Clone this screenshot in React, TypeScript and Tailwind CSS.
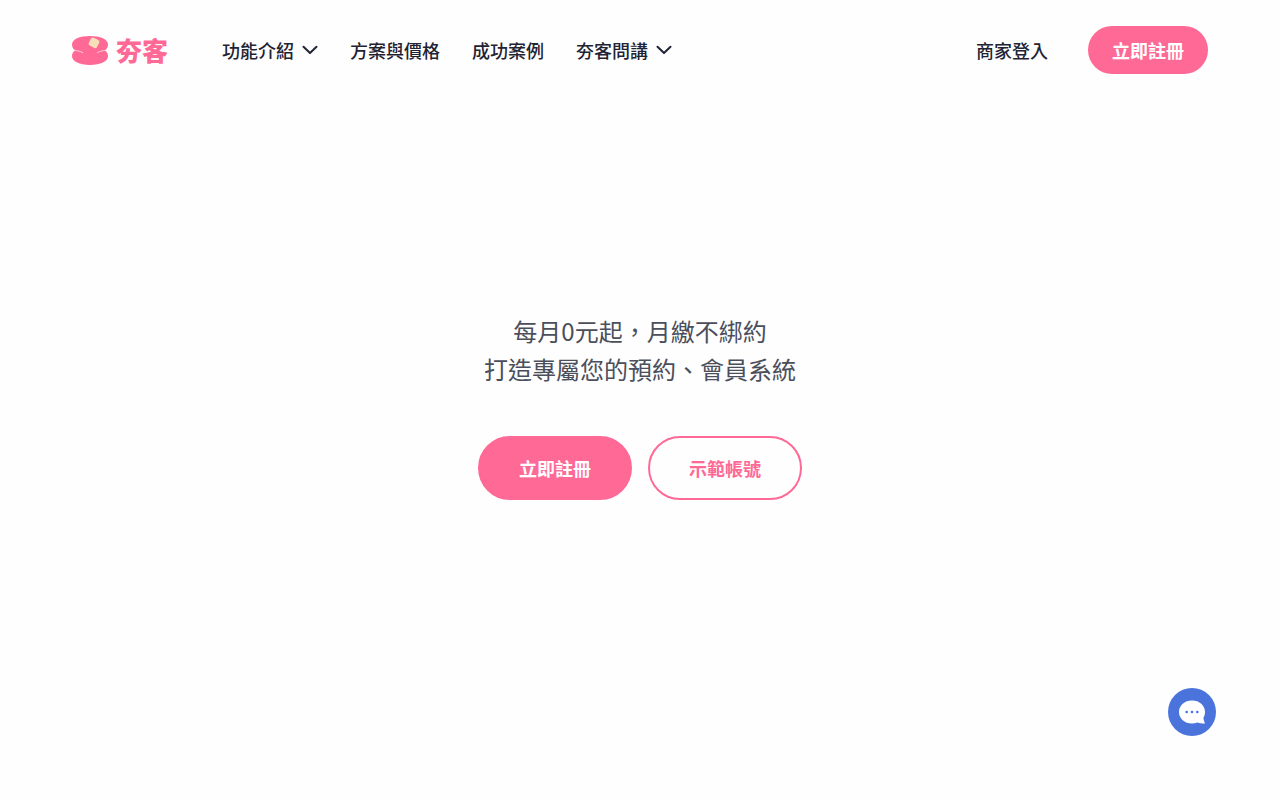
import { useState } from 'react'

type NavItem = {
  label: string
  href: string
  hasMenu?: boolean
}

const navItems: NavItem[] = [
  { label: '功能介紹', href: '#features', hasMenu: true },
  { label: '方案與價格', href: '#pricing' },
  { label: '成功案例', href: '#cases' },
  { label: '夯客問講', href: '#help', hasMenu: true },
]

function Logo() {
  return (
    <a href="#home" className="flex items-center gap-2 text-[#ff6996]">
      <svg className="h-[30px] w-9" viewBox="0 0 36 30" aria-hidden="true">
        <path
          fill="currentColor"
          d="M18 1C7.5 1 0 4.4 0 9.6C0 12.2 1.2 14.1 3.2 15.6C1.2 16.9 0 18.8 0 21C0 26.4 7.5 30 18 30S36 26.4 36 21C36 18.8 34.8 16.9 32.8 15.6C34.8 14.1 36 12.2 36 9.6C36 4.4 28.5 1 18 1Z"
        />
        <path
          fill="none"
          stroke="#ffffff"
          strokeWidth="0.6"
          strokeLinecap="round"
          d="M3 15.4Q7 15.6 10.8 17.6M33 15.4Q29 15.6 25.2 17.6"
        />
        <rect x="17.4" y="3.4" width="9.2" height="8.8" rx="2" fill="#f9dfb9" transform="rotate(27 22 7.8)" />
      </svg>
      <span className="text-[26px] leading-8 font-black">夯客</span>
    </a>
  )
}

function Chevron() {
  return (
    <svg
      className="size-4"
      viewBox="0 0 16 16"
      fill="none"
      stroke="currentColor"
      strokeWidth="2"
      strokeLinecap="round"
      strokeLinejoin="round"
      aria-hidden="true"
    >
      <path d="M1.5 4.8L8 11L14.5 4.8" />
    </svg>
  )
}

function ChatIcon() {
  return (
    <svg className="size-12" viewBox="0 0 48 48" aria-hidden="true">
      <path
        fill="#ffffff"
        d="M24 12.5C16.5 12.5 11 17.4 11 24C11 30.6 16.5 35.5 24 35.5C26 35.5 27.8 35.1 29.4 34.4C31.6 35.2 34.4 35.6 37 35.5C36.2 33.8 35.6 31.8 35.4 30C36.4 28.2 37 26.2 37 24C37 17.4 31.5 12.5 24 12.5Z"
      />
      <g fill="#4b73dc">
        <circle cx="18.7" cy="24" r="1.3" />
        <circle cx="24" cy="24" r="1.3" />
        <circle cx="29.3" cy="24" r="1.3" />
      </g>
    </svg>
  )
}

export default function App() {
  const [openMenu, setOpenMenu] = useState<string | null>(null)

  const toggleMenu = (label: string) => {
    setOpenMenu((prev) => (prev === label ? null : label))
  }

  return (
    <div className="min-h-screen bg-[#fefefe] font-['Noto_Sans_CJK_TC',sans-serif] text-lg text-[#1f2333]">
      <header className="flex items-center justify-between px-[72px] py-[26px]">
        <div className="flex items-center gap-[54px]">
          <Logo />
          <nav className="flex items-center gap-8 font-medium">
            {navItems.map((item) =>
              item.hasMenu ? (
                <button
                  key={item.label}
                  type="button"
                  aria-expanded={openMenu === item.label}
                  onClick={() => toggleMenu(item.label)}
                  className="flex items-center gap-2"
                >
                  {item.label}
                  <Chevron />
                </button>
              ) : (
                <a key={item.label} href={item.href}>
                  {item.label}
                </a>
              )
            )}
          </nav>
        </div>

        <div className="flex items-center gap-10">
          <a href="#login" className="font-medium">
            商家登入
          </a>
          <a
            href="#signup"
            className="flex h-12 items-center rounded-full bg-[#ff6996] px-6 font-bold text-white"
          >
            立即註冊
          </a>
        </div>
      </header>

      <main className="flex flex-col items-center px-6 pt-[212px]">
        <p className="text-center text-2xl leading-[38px] text-[#4b4f5b]">
          每月0元起，月繳不綁約
          <br />
          打造專屬您的預約、會員系統
        </p>
        <div className="mt-12 flex gap-4">
          <a
            href="#signup"
            className="flex h-16 items-center rounded-full border-2 border-[#ff6996] bg-[#ff6996] px-[39px] font-bold text-white"
          >
            立即註冊
          </a>
          <a
            href="#demo"
            className="flex h-16 items-center rounded-full border-2 border-[#ff6996] px-[39px] font-bold text-[#ff6996]"
          >
            示範帳號
          </a>
        </div>
      </main>

      {/* Floating chat launcher */}
      <button
        type="button"
        aria-label="Chat"
        className="fixed right-16 bottom-16 size-12 rounded-full bg-[#4b73dc]"
      >
        <ChatIcon />
      </button>
    </div>
  )
}
